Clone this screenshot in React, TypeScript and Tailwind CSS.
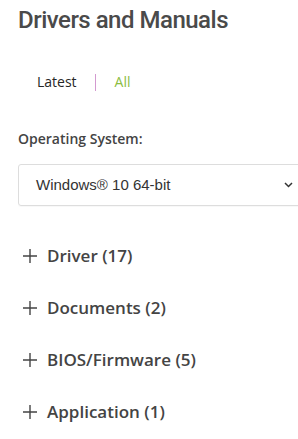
const groups = [
  { label: "Driver", count: 17 },
  { label: "Documents", count: 2 },
  { label: "BIOS/Firmware", count: 5 },
  { label: "Application", count: 1 },
];

function PlusIcon() {
  return (
    <svg width="16" height="16" viewBox="0 0 16 16" className="shrink-0">
      <path d="M8 1v14M1 8h14" stroke="#444" strokeWidth="1.4" fill="none" />
    </svg>
  );
}

export default function App() {
  return (
    <div className="h-[439px] w-[298px] overflow-hidden bg-white font-['Open_Sans',sans-serif] text-[#444]">
      <div className="pl-[18px] pt-[5px]">
        <h1 className="font-['Roboto',sans-serif] text-[24px] font-medium leading-[30px] tracking-[-0.5px] text-[#4a4a4a]">
          Drivers and Manuals
        </h1>

        <div className="mt-[37px] flex items-center pl-[19px] text-[14px] leading-[20px]">
          <span className="text-[#262626]">Latest</span>
          <span className="ml-[18px] mr-[19px] h-[17px] w-px bg-[#d39ad0]" />
          <span className="text-[#8cbd3f]">All</span>
        </div>

        <p className="mt-[38px] text-[14px] font-semibold leading-[18px] text-[#444]">
          Operating System:
        </p>

        <div className="mt-[16px] flex h-[42px] w-[300px] items-center justify-between rounded-[3px] border border-[#ddd] pl-[17px] pr-[24px] shadow-[0_1px_1px_rgba(0,0,0,0.03)]">
          <span className="font-['Liberation_Sans',sans-serif] text-[15px] text-[#333]">
            Windows® 10 64-bit
          </span>
          <svg width="9" height="6" viewBox="0 0 9 6">
            <path d="M1 1l3.5 3.5L8 1" stroke="#333" strokeWidth="1.5" fill="none" />
          </svg>
        </div>

        <ul className="mt-[38px] flex flex-col gap-[28px]">
          {groups.map((g) => (
            <li key={g.label} className="flex h-[24px] items-center gap-[9px] pl-[4px]">
              <PlusIcon />
              <span className="text-[17px] font-semibold text-[#444]">
                {g.label} ({g.count})
              </span>
            </li>
          ))}
        </ul>
      </div>
    </div>
  );
}
